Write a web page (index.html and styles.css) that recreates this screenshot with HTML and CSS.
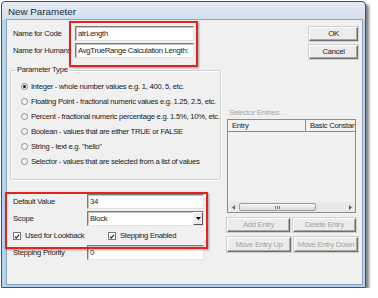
FILE: index.html
```html
<!DOCTYPE html>
<html>
<head>
<meta charset="utf-8">
<link rel="stylesheet" href="styles.css">
</head>
<body>
<div class="window">
  <div class="titlebar">New Parameter</div>
  <div class="client">
    <div class="left">
      <div class="namerow"><span class="lbl">Name for Code</span><div class="tb wide">atrLength</div></div>
      <div class="namerow"><span class="lbl">Name for Humans</span><div class="tb wide">AvgTrueRange Calculation Length:</div></div>
      <fieldset class="group">
        <legend>Parameter Type</legend>
        <div class="opt"><span class="radio on"></span>Integer - whole number values e.g. 1, 400, 5, etc.</div>
        <div class="opt"><span class="radio"></span>Floating Point - fractional numeric values e.g. 1.25, 2.5, etc.</div>
        <div class="opt"><span class="radio"></span>Percent - fractional numeric percentage e.g. 1.5%, 10%, etc.</div>
        <div class="opt"><span class="radio"></span>Boolean - values that are either TRUE or FALSE</div>
        <div class="opt"><span class="radio"></span>String - text e.g. "hello"</div>
        <div class="opt"><span class="radio"></span>Selector - values that are selected from a list of values</div>
      </fieldset>
      <div class="form">
        <div class="frow"><span class="flbl">Default Value</span><div class="tb mid">34</div></div>
        <div class="frow"><span class="flbl">Scope</span><div class="tb mid combo"><span>Block</span><span class="drop"><svg width="5" height="3" viewBox="0 0 5 3"><path d="M0 0h5L2.5 3z" fill="#000"/></svg></span></div></div>
        <div class="frow checks">
          <span class="chk first"><span class="box"><svg width="7" height="7" viewBox="0 0 7 7"><path d="M1 3.5l1.6 1.8L6 1.2" stroke="#222" stroke-width="1.3" fill="none"/></svg></span>Used for Lookback</span>
          <span class="chk"><span class="box"><svg width="7" height="7" viewBox="0 0 7 7"><path d="M1 3.5l1.6 1.8L6 1.2" stroke="#222" stroke-width="1.3" fill="none"/></svg></span>Stepping Enabled</span>
        </div>
        <div class="frow"><span class="flbl">Stepping Priority</span><div class="tb mid">0</div></div>
      </div>
    </div>
    <div class="right">
      <div class="btn">OK</div>
      <div class="btn">Cancel</div>
      <div class="sel-lbl">Selector Entries:</div>
      <div class="list">
        <div class="lhead"><span class="hc first">Entry</span><span class="hc">Basic Constant</span></div>
        <div class="lbody"></div>
        <div class="hscroll">
          <span class="arr"><svg width="3" height="5" viewBox="0 0 3 5"><path d="M3 0v5L0 2.5z" fill="#606060"/></svg></span>
          <span class="track"><span class="thumb"><span class="grip"></span></span></span>
          <span class="arr"><svg width="3" height="5" viewBox="0 0 3 5"><path d="M0 0v5l3-2.5z" fill="#606060"/></svg></span>
        </div>
      </div>
      <div class="brow"><div class="btn dis">Add Entry</div><div class="btn dis">Delete Entry</div></div>
      <div class="brow two"><div class="btn dis">Move Entry Up</div><div class="btn dis">Move Entry Down</div></div>
    </div>
    <div class="mark mark1"></div>
    <div class="mark mark2"></div>
  </div>
</div>
</body>
</html>
```
FILE: styles.css
```css
* { box-sizing: border-box; }
body {
  margin: 0;
  background: #fff;
  font-family: "Liberation Sans", Arial, sans-serif;
  font-size: 7.7px;
  letter-spacing: -0.28px;
  color: #1a1a1a;
}
.window {
  margin: 1px 0 0 1px;
  width: 365px;
  height: 287px;
  border: 1px solid #3f5266;
  border-radius: 4px 4px 0 0;
  background: linear-gradient(#e4ecf5, #d3dfec 17px, #b9d3ec 19px, #b3d0ed);
  box-shadow: 3px 3px 3px rgba(0,0,0,0.5);
  display: flex;
  flex-direction: column;
}
.titlebar {
  height: 18px;
  line-height: 19px;
  padding-left: 6px;
  font-size: 9.8px;
  letter-spacing: 0;
  color: #1e2b3a;
}
.client {
  position: relative;
  flex: 1;
  margin: 0 3px 3px 5px;
  background: #f0f0f0;
  box-shadow: 0 0 0 1px #8ca3bb;
  display: grid;
  grid-template-columns: 213px 1fr;
}
.left { padding-top: 6px; }
.namerow {
  display: flex;
  align-items: center;
  height: 15px;
  padding-left: 6px;
}
.namerow + .namerow { margin-top: 2px; }
.lbl {
  flex: 0 0 62px;
  white-space: nowrap;
  overflow: visible;
}
.tb {
  position: relative;
  height: 15px;
  background: #fff;
  border: 1px solid;
  border-color: #7a7a7a #e3e3e3 #e3e3e3 #7a7a7a;
  box-shadow: inset 1px 1px 0 #c4c4c4;
  padding: 0 2px;
  line-height: 13px;
  white-space: nowrap;
  overflow: hidden;
}
.wide { width: 119px; }
.mid { width: 117px; }
.group {
  margin: 7px 0 0 3px;
  width: 209px;
  height: 115px;
  border: 1px solid #d0d0d0;
  box-shadow: inset 1px 1px 0 #fff, 1px 1px 0 #fff;
  border-radius: 2px;
  padding: 4px 0 0 10px;
}
.group legend {
  padding: 0 1px;
  margin-left: -5px;
  line-height: 10px;
}
.opt {
  display: flex;
  align-items: center;
  height: 15px;
  white-space: nowrap;
}
.radio {
  width: 7px;
  height: 7px;
  border-radius: 50%;
  border: 1px solid #8a8a8a;
  background: #f6f6f6;
  margin-right: 3px;
  display: flex;
  align-items: center;
  justify-content: center;
}
.radio.on::after {
  content: "";
  width: 3px;
  height: 3px;
  border-radius: 50%;
  background: #111;
}
.form { margin-top: 14px; }
.frow {
  display: flex;
  align-items: center;
  height: 15px;
  padding-left: 6px;
}
.frow + .frow { margin-top: 2px; }
.flbl { flex: 0 0 74px; white-space: nowrap; }
.combo {
  display: flex;
  justify-content: space-between;
  align-items: center;
  padding-right: 0;
}
.drop {
  width: 10px;
  height: 13px;
  border: 1px solid;
  border-color: #fff #5a5a5a #5a5a5a #fff;
  background: #ececec;
  display: flex;
  align-items: center;
  justify-content: center;
}
.chk {
  display: flex;
  align-items: center;
  white-space: nowrap;
}
.chk.first { flex: 0 0 95px; }
.box {
  width: 8px;
  height: 8px;
  border: 1px solid #7a7a7a;
  background: #fff;
  margin-right: 4px;
  display: flex;
}
.right {
  display: flex;
  flex-direction: column;
  padding: 7px 6px 0 7px;
}
.btn {
  align-self: flex-end;
  width: 49px;
  height: 14px;
  border: 1px solid;
  border-color: #fff #6f6f6f #6f6f6f #fff;
  box-shadow: inset -1px -1px 0 #a8a8a8, 0 0 0 1px #cfcfcf;
  background: #ececec;
  text-align: center;
  line-height: 12px;
  white-space: nowrap;
}
.btn + .btn { margin-top: 4px; }
.sel-lbl {
  margin-top: 49px;
  height: 10px;
  line-height: 10px;
  padding-left: 2px;
  color: #a6a6a6;
}
.list {
  margin-top: 1px;
  width: 129px;
  height: 94px;
  border: 1px solid #8c8c8c;
  display: flex;
  flex-direction: column;
  overflow: hidden;
}
.lhead {
  display: flex;
  height: 12px;
  border-bottom: 1px solid #8c8c8c;
  background: #f2f2f2;
  flex: 0 0 12px;
}
.hc {
  line-height: 11px;
  padding-left: 4px;
  white-space: nowrap;
  overflow: hidden;
}
.hc.first { flex: 0 0 78px; border-right: 1px solid #8c8c8c; }
.lbody { flex: 1; }
.hscroll {
  flex: 0 0 10px;
  display: flex;
  align-items: center;
  background: #e9e9e9;
}
.arr {
  flex: 0 0 10px;
  display: flex;
  justify-content: center;
}
.track { flex: 1; height: 10px; padding: 1px 0 1px 1px; }
.thumb {
  display: flex;
  align-items: center;
  justify-content: center;
  width: 77px;
  height: 8px;
  border: 1px solid #9b9b9b;
  border-radius: 2px;
  background: linear-gradient(#f6f6f6, #dcdcdc);
}
.grip {
  width: 5px;
  height: 3px;
  background: repeating-linear-gradient(90deg, #777 0 1px, transparent 1px 2px);
}
.brow {
  display: flex;
  gap: 3px;
  margin-top: 5px;
}
.brow .btn {
  align-self: auto;
  width: 63px;
  margin-top: 0;
}
.brow.two .btn { width: 64px; height: 15px; line-height: 13px; }
.btn.dis { color: #a3a3a3; }
.mark {
  position: absolute;
  border: 2px solid #e5231e;
  box-shadow: 1px 1px 2px rgba(0,0,0,0.35);
}
.mark1 { left: 62px; top: 1px; width: 129px; height: 46px; }
.mark2 { left: -2px; top: 172px; width: 203px; height: 57px; }
```
